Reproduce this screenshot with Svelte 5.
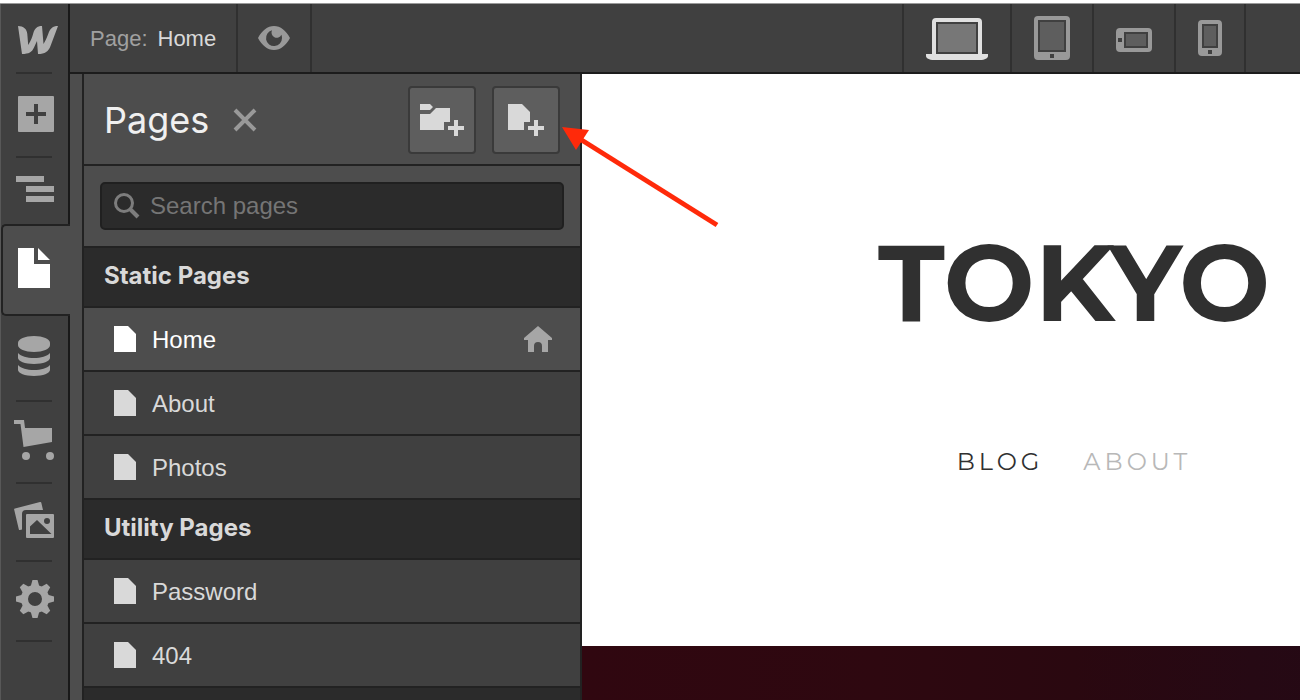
<script lang="ts">
	interface Tool {
		id: string;
		label: string;
	}

	interface PageGroup {
		title: string;
		pages: { name: string; home?: boolean }[];
	}

	const tools: Tool[] = [
		{ id: 'add', label: 'Add elements' },
		{ id: 'navigator', label: 'Navigator' },
		{ id: 'pages', label: 'Pages' },
		{ id: 'cms', label: 'Collections' },
		{ id: 'shop', label: 'Ecommerce' },
		{ id: 'assets', label: 'Assets' },
		{ id: 'settings', label: 'Settings' }
	];

	const devices = ['desktop', 'tablet', 'landscape', 'phone'];

	const groups: PageGroup[] = [
		{
			title: 'Static Pages',
			pages: [{ name: 'Home', home: true }, { name: 'About' }, { name: 'Photos' }]
		},
		{
			title: 'Utility Pages',
			pages: [{ name: 'Password' }, { name: '404' }]
		}
	];

	const teeth = [0, 45, 90, 135, 180, 225, 270, 315];

	let activeTool = $state('pages');
	let activeDevice = $state('desktop');
	let current = $state('Home');
	let query = $state('');
</script>

<div class="designer">
	<nav class="tools" aria-label="Tools">
		<a class="logo" href="#dashboard" aria-label="Dashboard">
			<svg width="44" height="40" viewBox="0 0 44 40">
				<path
					d="M4 6c5.500 0 9 3 9.300 8l.9 11c2.800-4.500 4-8 5-11.500C20.600 8.500 23 6 28 6l1.500 18c2.600-4.500 3.800-7.500 4.900-10.500C36.200 8.500 38.500 6 44 6L36.500 26c-2 5.500-5.500 8-12.500 8L23 21l-3 6.500C18 32 15 34 8 34z"
				/>
			</svg>
		</a>
		<span class="rule"></span>
		{#each tools as tool (tool.id)}
			<button
				class="tool {tool.id}"
				class:active={activeTool === tool.id}
				aria-label={tool.label}
				onclick={() => (activeTool = tool.id)}
			>
				<svg width="40" height="40" viewBox="0 0 40 40">
					{#if tool.id === 'add'}
						<path fill-rule="evenodd" d="M5 3h34a1 1 0 0 1 1 1v34a1 1 0 0 1-1 1H5a1 1 0 0 1-1-1V4a1 1 0 0 1 1-1zM20 11v8h-8v4h8v8h4v-8h8v-4h-8v-8z" />
					{:else if tool.id === 'navigator'}
						<path d="M2 7h28v6H2zM12 17h28v6H12zM12 27h28v6H12z" />
					{:else if tool.id === 'pages'}
						<path d="M4 0h16v16h16v24H4zM24 0l12 12H24z" />
					{:else if tool.id === 'cms'}
						<path d="M4 7c0-4 7-7 16-7s16 3 16 7v2c0 4-7 7-16 7S4 13 4 9z" />
						<path d="M4 17c3 3.500 9 5 16 5s13-1.500 16-5v5c0 3-7 6-16 6S4 25 4 22z" />
						<path d="M4 29c3 3.500 9 5 16 5s13-1.500 16-5v5c0 3-7 6-16 6S4 37 4 34z" />
					{:else if tool.id === 'shop'}
						<path d="M0 0h10l1 8h27v14L9.500 27 6.500 4H0z" />
						<circle cx="12" cy="36" r="4" />
						<circle cx="36" cy="36" r="4" />
					{:else if tool.id === 'assets'}
						<path d="M1 8.500 26 2a1 1 0 0 1 1.300.8L29 10H12a4 4 0 0 0-4 4v15.500l-2 .5a1 1 0 0 1-1.200-.8L.2 9.800A1 1 0 0 1 1 8.500z" />
						<path fill-rule="evenodd" d="M13 14h26a1 1 0 0 1 1 1v22a1 1 0 0 1-1 1H13a1 1 0 0 1-1-1V15a1 1 0 0 1 1-1zM16 34h21.500L23 20l-7 6.500zM33 18a3 3 0 1 0 0 6 3 3 0 0 0 0-6z" />
					{:else}
						<g transform="translate(21 20)">
							{#each teeth as angle (angle)}
								<path d="M-4.500-12-2.500-19h5l2 7z" transform="rotate({angle})" />
							{/each}
							<circle r="10.500" fill="none" stroke="currentColor" stroke-width="7" />
						</g>
					{/if}
				</svg>
			</button>
			{#if tool.id !== 'navigator' && tool.id !== 'pages'}
				<span class="rule"></span>
			{/if}
		{/each}
	</nav>

	<div class="workspace">
		<header class="topbar">
			<button class="page-picker">
				<span class="muted">Page:</span>
				{current}
			</button>
			<button class="preview" aria-label="Preview">
				<svg width="32" height="24" viewBox="0 0 32 24">
					<path fill-rule="evenodd" d="M0 12C4 4.500 9.500 0 16 0s12 4.500 16 12c-4 7.500-9.500 12-16 12S4 19.500 0 12zM14 4.300A8 8 0 1 0 24 12c0-1.200-.2-2.200-.6-3.200A5 5 0 0 1 14 4.300z" />
				</svg>
			</button>
			<div class="devices">
				{#each devices as device (device)}
					<button
						class="device {device}"
						class:active={activeDevice === device}
						aria-label={device}
						onclick={() => (activeDevice = device)}
					>
						{#if device === 'desktop'}
							<svg width="62" height="44" viewBox="0 0 62 44">
								<path fill-rule="evenodd" d="M10 2h42a4 4 0 0 1 4 4v32h6v2c0 2-3 4-8 4H8c-5 0-8-2-8-4v-2h6V6a4 4 0 0 1 4-4zM10 6v32h42V6z" />
								<path class="screen" d="M12 8h38v28H12z" />
							</svg>
						{:else if device === 'tablet'}
							<svg width="36" height="44" viewBox="0 0 36 44">
								<path fill-rule="evenodd" d="M4 0h28a4 4 0 0 1 4 4v36a4 4 0 0 1-4 4H4a4 4 0 0 1-4-4V4a4 4 0 0 1 4-4zM4 4v32h28V4zM16 38v4h4v-4z" />
								<path class="screen" d="M6 6h24v28H6z" />
							</svg>
						{:else if device === 'landscape'}
							<svg width="36" height="28" viewBox="0 -4 36 28">
								<path fill-rule="evenodd" d="M4 0h28a4 4 0 0 1 4 4v16a4 4 0 0 1-4 4H4a4 4 0 0 1-4-4V4a4 4 0 0 1 4-4zM8 4v16h24V4zM2 10v4h4v-4z" />
								<path class="screen" d="M10 6h20v12H10z" />
							</svg>
						{:else}
							<svg width="24" height="36" viewBox="0 0 24 36">
								<path fill-rule="evenodd" d="M4 0h16a4 4 0 0 1 4 4v28a4 4 0 0 1-4 4H4a4 4 0 0 1-4-4V4a4 4 0 0 1 4-4zM4 4v24h16V4zM10 30v4h4v-4z" />
								<path class="screen" d="M6 6h12v20H6z" />
							</svg>
						{/if}
					</button>
				{/each}
			</div>
		</header>

		<div class="main">
			<aside class="panel">
				<div class="panel-head">
					<h1>Pages</h1>
					<button class="close" aria-label="Close">
						<svg width="24" height="24" viewBox="0 0 24 24">
							<path d="M2 2l20 20M22 2 2 22" fill="none" stroke="currentColor" stroke-width="4" />
						</svg>
					</button>
					<button class="create" aria-label="Create folder">
						<svg width="44" height="32" viewBox="0 0 44 32">
							<path d="M0 0h10l3 3-3 3H0zM0 10h10l6-6h14v14h-6v8H0zM34 16h4v6h6v4h-6v6h-4v-6h-6v-4h6z" />
						</svg>
					</button>
					<button class="create" aria-label="Create page">
						<svg width="44" height="32" viewBox="0 0 44 32">
							<path d="M4 0h14l8 8v10h-6v8H4zM30 16h4v6h6v4h-6v6h-4v-6h-6v-4h6z" />
						</svg>
					</button>
				</div>

				<div class="search">
					<label class="search-box">
						<svg width="26" height="26" viewBox="0 0 26 26">
							<g fill="none" stroke="currentColor" stroke-width="3">
								<circle cx="10" cy="10" r="8.500" />
								<path d="M16 16l8 8" stroke-width="4" />
							</g>
						</svg>
						<input type="text" placeholder="Search pages" aria-label="Search pages" bind:value={query} />
					</label>
				</div>

				{#each groups as group (group.title)}
					<section>
						<h2>{group.title}</h2>
						<ul>
							{#each group.pages as page (page.name)}
								<li>
									<button
										class="row"
										class:selected={current === page.name}
										onclick={() => (current = page.name)}
									>
										<svg width="22" height="26" viewBox="0 0 22 26">
											<path d="M0 0h14l8 8v18H0z" />
										</svg>
										<span class="name">{page.name}</span>
										{#if page.home}
											<svg class="home" width="28" height="26" viewBox="0 0 28 26">
												<path d="M14 0l14 12v2h-4v12h-6v-6a4 4 0 0 0-8 0v6H4V14H0v-2z" />
											</svg>
										{/if}
									</button>
								</li>
							{/each}
						</ul>
					</section>
				{/each}
				<div class="panel-rest"></div>
			</aside>

			<main class="canvas">
				<div class="site">
					<div class="site-head">
						<div class="brand">TOKYO</div>
						<nav class="site-nav" aria-label="Site">
							<a class="current" href="#blog">BLOG</a>
							<a href="#about">ABOUT</a>
						</nav>
					</div>
					<div class="photo"></div>
				</div>
			</main>
		</div>
	</div>

	<svg class="pointer" width="160" height="104" viewBox="0 0 160 104" aria-hidden="true">
		<path d="M2 3l27 3-13 20z" />
		<path d="M20 15l137 86" fill="none" stroke="#ff2a0a" stroke-width="5" />
	</svg>
</div>

<style>
	:global(body) {
		margin: 0;
		background: #fff;
	}

	.designer {
		--line: #222;
		--bar: #404040;
		--raised: #4d4d4d;
		--icon: #a6a6a6;
		box-sizing: border-box;
		position: relative;
		display: flex;
		height: 100vh;
		padding-top: 3px;
		overflow: hidden;
		font-family: 'Liberation Sans', Arial, sans-serif;
		font-size: 24px;
		color: #d9d9d9;
	}

	svg {
		display: block;
		flex: none;
		fill: currentColor;
	}

	button {
		margin: 0;
		padding: 0;
		border: 0;
		background: none;
		color: inherit;
		font: inherit;
		cursor: pointer;
	}

	/* left tool strip */
	.tools {
		box-sizing: border-box;
		flex: none;
		display: flex;
		flex-direction: column;
		width: 70px;
		border-top: 1px solid #9a9a9a;
		background: linear-gradient(90deg, #585858 1px, var(--bar) 1px);
		color: var(--icon);
	}

	.logo,
	.tool {
		box-sizing: border-box;
		display: flex;
		align-items: center;
		flex: none;
		padding: 0 0 4px 14px;
		border-right: 2px solid #191919;
	}

	.logo {
		height: 68px;
		padding: 4px 0 0 14px;
		color: #b0b0b0;
	}

	.rule {
		flex: none;
		height: 2px;
		border-right: 2px solid #191919;
		background: linear-gradient(#303030, #303030) 16px 0 / 36px 2px no-repeat;
	}

	.add { height: 82px; }
	.navigator { height: 66px; }
	.pages { height: 92px; }
	.cms { height: 84px; }
	.shop { height: 80px; }
	.assets { height: 76px; }
	.settings { height: 78px; }

	.tool.active {
		margin-left: 1px;
		padding-left: 11px;
		border: 2px solid var(--line);
		border-right: 0;
		border-radius: 5px 0 0 5px;
		background: var(--raised);
		color: #fff;
	}

	.tools::after {
		content: '';
		flex: 1;
		border-right: 2px solid #191919;
	}

	.workspace {
		flex: 1;
		min-width: 0;
		display: flex;
		flex-direction: column;
	}

	/* top bar */
	.topbar {
		flex: none;
		display: flex;
		height: 68px;
		border-top: 1px solid #9a9a9a;
		border-bottom: 2px solid #1c1c1c;
		background: var(--bar);
	}

	.page-picker {
		display: flex;
		align-items: center;
		gap: 10px;
		padding: 2px 20px 0;
		border-right: 2px solid #303030;
		font-size: 22px;
	}

	.muted {
		color: #a0a0a0;
	}

	.preview {
		width: 74px;
		display: flex;
		align-items: center;
		justify-content: center;
		border-right: 2px solid #303030;
		color: #999;
	}

	.devices {
		display: flex;
		margin-left: auto;
		padding-right: 54px;
	}

	.device {
		display: flex;
		align-items: center;
		justify-content: center;
		width: 80px;
		border-left: 2px solid #303030;
		box-sizing: content-box;
		color: #999;
	}

	.desktop {
		width: 106px;
	}

	.phone {
		width: 68px;
		border-right: 2px solid #303030;
	}

	.device.active {
		color: #e0e0e0;
	}

	.screen {
		fill: #5e5e5e;
	}

	.active .screen {
		fill: #777;
	}

	.main {
		flex: 1;
		min-height: 0;
		display: flex;
	}

	/* pages panel */
	.panel {
		box-sizing: border-box;
		flex: none;
		display: flex;
		flex-direction: column;
		width: 512px;
		border-left: 12px solid var(--raised);
		box-shadow: inset 2px 0 var(--line), inset -2px 0 var(--line);
		padding: 0 2px;
		overflow: hidden;
	}

	.panel-head {
		box-sizing: border-box;
		flex: none;
		display: flex;
		align-items: center;
		gap: 16px;
		height: 92px;
		padding: 2px 20px 0;
		border-bottom: 2px solid var(--line);
		background: var(--raised);
	}

	h1 {
		margin: 0;
		font-family: Inter, sans-serif;
		font-size: 36px;
		font-weight: 400;
		color: #f0f0f0;
	}

	.close {
		margin: 0 auto 0 8px;
		color: #999;
	}

	.create {
		box-sizing: border-box;
		display: flex;
		align-items: center;
		justify-content: center;
		width: 68px;
		height: 68px;
		border: 2px solid #3a3a3a;
		border-radius: 4px;
		background: #5e5e5e;
	}

	.search {
		flex: none;
		padding: 16px;
		border-bottom: 2px solid var(--line);
		background: var(--raised);
	}

	.search-box {
		box-sizing: border-box;
		display: flex;
		align-items: center;
		gap: 10px;
		height: 48px;
		padding: 0 12px;
		border: 2px solid #202020;
		border-radius: 5px;
		background: #2b2b2b;
		color: #7d7d7d;
	}

	input {
		flex: 1;
		min-width: 0;
		padding: 0;
		border: 0;
		outline: 0;
		background: none;
		color: #d9d9d9;
		font: inherit;
	}

	input::placeholder {
		color: #757575;
		opacity: 1;
	}

	section {
		flex: none;
	}

	h2 {
		margin: 0;
		padding: 0 20px 2px;
		border-bottom: 2px solid var(--line);
		background: #2b2b2b;
		font-family: Inter, sans-serif;
		font-size: 24px;
		font-weight: 700;
		line-height: 56px;
	}

	ul {
		margin: 0;
		padding: 0;
		list-style: none;
	}

	.row {
		box-sizing: border-box;
		display: flex;
		align-items: center;
		gap: 16px;
		width: 100%;
		height: 64px;
		padding: 0 28px 0 30px;
		border-bottom: 2px solid var(--line);
		background: var(--bar);
		text-align: left;
	}

	.row.selected {
		background: var(--raised);
		color: #fff;
	}

	.name {
		flex: 1;
		padding-top: 2px;
	}

	.home {
		color: var(--icon);
	}

	.panel-rest {
		flex: 1;
		background: #2b2b2b;
	}

	/* page being edited */
	.canvas {
		flex: 1;
		min-width: 0;
		overflow: hidden;
		background: #fff;
	}

	.site {
		display: flex;
		flex-direction: column;
		min-width: 984px;
		height: 100%;
	}

	.site-head {
		box-sizing: border-box;
		flex: none;
		display: flex;
		flex-direction: column;
		align-items: center;
		gap: 100px;
		height: 572px;
		padding-top: 144px;
		font-family: Montserrat, Inter, sans-serif;
	}

	.brand {
		font-size: 108px;
		font-weight: 700;
		line-height: 128px;
		color: #303030;
	}

	.site-nav {
		display: flex;
		gap: 40px;
		line-height: 32px;
		letter-spacing: 4px;
	}

	.site-nav a {
		color: #b8b8b8;
		text-decoration: none;
	}

	.site-nav .current {
		color: #303030;
	}

	.photo {
		flex: 1;
		background: linear-gradient(90deg, #300710 0%, #2e0810 30%, #2a0810 50%, #260914 68%, #220a16 100%);
	}

	/* callout arrow lies over the panel edge and the canvas */
	.pointer {
		position: absolute;
		left: 560px;
		top: 124px;
		fill: #ff2a0a;
		pointer-events: none;
	}
</style>
